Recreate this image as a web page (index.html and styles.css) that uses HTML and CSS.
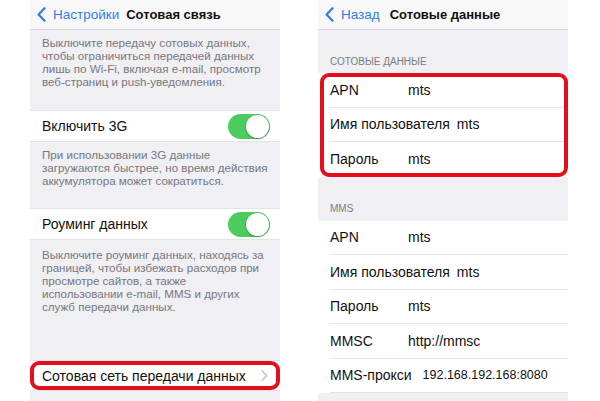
FILE: index.html
```html
<!DOCTYPE html>
<html lang="ru">
<head>
    <meta charset="UTF-8">
    <meta name="viewport" content="width=device-width, initial-scale=1.0">
    <title>Сотовая связь</title>
    <link rel="stylesheet" href="styles.css">
</head>
<body>
    <div class="screens">
        <!-- Settings > Cellular -->
        <section class="phone">
            <header class="navbar">
                <a class="back" href="#">
                    <svg class="chevron-back" width="9" height="15" viewBox="0 0 9 15"><path d="M7.5 1.2 L1.6 7.5 L7.5 13.8" fill="none" stroke="#2f7fe0" stroke-width="2.2" stroke-linecap="round" stroke-linejoin="round"/></svg>
                    Настройки
                </a>
                <span class="title">Сотовая связь</span>
            </header>

            <p class="note note-top">Выключите передачу сотовых данных,<br>чтобы ограничиться передачей данных<br>лишь по Wi-Fi, включая e-mail, просмотр<br>веб-страниц и push-уведомления.</p>

            <div class="row">
                <span class="label">Включить 3G</span>
                <span class="switch on"><span class="knob"></span></span>
            </div>

            <p class="note note-mid">При использовании 3G данные<br>загружаются быстрее, но время действия<br>аккумулятора может сократиться.</p>

            <div class="row">
                <span class="label">Роуминг данных</span>
                <span class="switch on"><span class="knob"></span></span>
            </div>

            <p class="note note-bottom">Выключите роуминг данных, находясь за<br>границей, чтобы избежать расходов при<br>просмотре сайтов, а также<br>использовании e-mail, MMS и других<br>служб передачи данных.</p>

            <div class="row row-link marked">
                <span class="label">Сотовая сеть передачи данных</span>
                <svg class="chevron" width="7" height="11" viewBox="0 0 7 11"><path d="M1.2 1 L5.7 5.5 L1.2 10" fill="none" stroke="#c4c4c9" stroke-width="1.6" stroke-linecap="round" stroke-linejoin="round"/></svg>
            </div>
        </section>

        <!-- Cellular data network -->
        <section class="phone">
            <header class="navbar">
                <a class="back" href="#">
                    <svg class="chevron-back" width="9" height="15" viewBox="0 0 9 15"><path d="M7.5 1.2 L1.6 7.5 L7.5 13.8" fill="none" stroke="#2f7fe0" stroke-width="2.2" stroke-linecap="round" stroke-linejoin="round"/></svg>
                    Назад
                </a>
                <span class="title title-wide">Сотовые данные</span>
            </header>

            <div class="group-title">Сотовые данные</div>
            <div class="group marked">
                <div class="field"><span class="key">APN</span><span class="value">mts</span></div>
                <div class="field"><span class="key">Имя пользователя</span><span class="value">mts</span></div>
                <div class="field"><span class="key">Пароль</span><span class="value">mts</span></div>
            </div>

            <div class="group-title group-title-mms">MMS</div>
            <div class="group">
                <div class="field"><span class="key">APN</span><span class="value">mts</span></div>
                <div class="field"><span class="key">Имя пользователя</span><span class="value">mts</span></div>
                <div class="field"><span class="key">Пароль</span><span class="value">mts</span></div>
                <div class="field"><span class="key">MMSC</span><span class="value">http://mmsc</span></div>
                <div class="field"><span class="key">MMS-прокси</span><span class="value value-small">192.168.192.168:8080</span></div>
            </div>
        </section>
    </div>
</body>
</html>
```

FILE: styles.css
```css
* {
    margin: 0;
    padding: 0;
    box-sizing: border-box;
}

body {
    width: 600px;
    height: 401px;
    overflow: hidden;
    background: #fff;
    font-family: "Liberation Sans", Arial, sans-serif;
    color: #111;
    -webkit-font-smoothing: antialiased;
}

.screens {
    display: flex;
    gap: 38px;
    padding-left: 30px;
    height: 401px;
}

.phone {
    width: 250px;
    height: 401px;
    background: #efeff4;
    overflow: hidden;
}

/* nav bar */

.navbar {
    height: 30px;
    display: flex;
    align-items: center;
    padding-left: 7px;
    background: #f8f8f8;
    border-bottom: 1px solid #d4d4d8;
}

.back {
    display: flex;
    align-items: center;
    gap: 7px;
    color: #2f7fe0;
    text-decoration: none;
    font-size: 13.5px;
}

.title {
    margin-left: 7px;
    font-size: 13px;
    font-weight: bold;
    color: #111;
}

.title-wide {
    margin-left: 10px;
}

/* left screen */

.note {
    padding: 6px 12px 0;
    font-size: 11.6px;
    line-height: 13px;
    color: #77777c;
}

.note-top {
    height: 80px;
}

.note-mid {
    height: 66px;
}

.note-bottom {
    height: 120px;
    padding-top: 8px;
}

.row {
    height: 32px;
    display: flex;
    align-items: center;
    justify-content: space-between;
    padding: 0 10px 0 12px;
    background: #fff;
    border-top: 1px solid #e4e4e8;
    border-bottom: 1px solid #e4e4e8;
    font-size: 14px;
}

.row-link {
    height: 31px;
}

.switch {
    width: 42px;
    height: 25px;
    border-radius: 13px;
    background: #4ccb5f;
    display: flex;
    align-items: center;
    justify-content: flex-end;
    padding-right: 1px;
}

.knob {
    width: 23px;
    height: 23px;
    border-radius: 50%;
    background: #fff;
    box-shadow: 0 1px 2px rgba(0,0,0,0.25), 0 0 0 0.5px rgba(0,0,0,0.1);
}

.chevron {
    margin-right: 2px;
}

/* red frame drawn over the marked block */

.marked {
    position: relative;
}

.marked::after {
    content: "";
    position: absolute;
    inset: 0;
    border: 4px solid #e50f1c;
    border-radius: 9px;
    pointer-events: none;
}

.group.marked::after {
    left: 2px;
}

/* right screen */

.group-title {
    padding: 26px 12px 5px;
    height: 43px;
    font-size: 10px;
    line-height: 12px;
    color: #7c7c80;
    text-transform: uppercase;
}

.group-title-mms {
    height: 44px;
}

.group {
    background: #fff;
}

.field {
    height: 34.5px;
    display: flex;
    align-items: center;
    margin-left: 12px;
    border-bottom: 1px solid #e4e4e8;
    font-size: 14px;
}

.group.marked .field:last-child {
    border-bottom: none;
}

.key {
    min-width: 71px;
    margin-right: 7px;
}

.value-small {
    margin-left: 4px;
    font-size: 12.5px;
}
```
